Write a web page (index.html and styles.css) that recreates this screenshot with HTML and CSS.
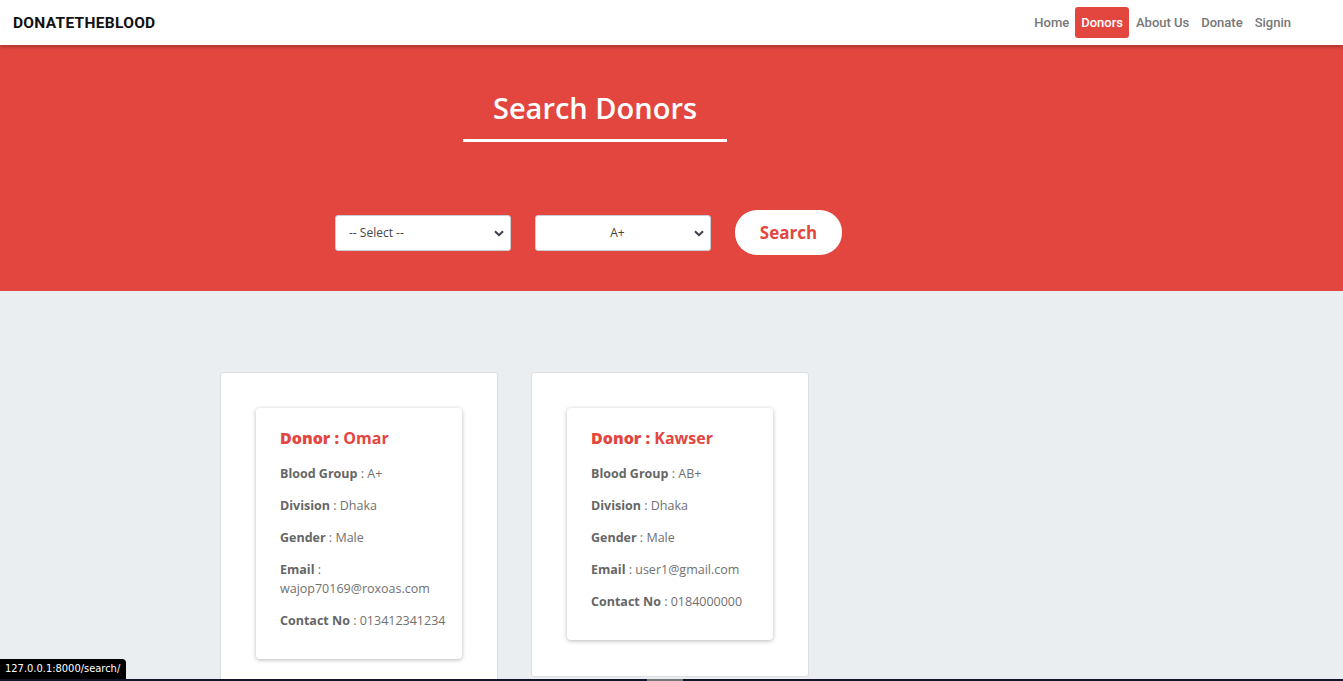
FILE: index.html
```html
<!DOCTYPE html>
<html>
<head>
<meta charset="utf-8">
<title>Search Donors</title>
<link rel="stylesheet" href="styles.css">
</head>
<body>
<header class="navbar">
  <div class="brand">DONATETHEBLOOD</div>
  <nav class="nav">
    <a class="nav-link">Home</a>
    <a class="nav-link active">Donors</a>
    <a class="nav-link">About Us</a>
    <a class="nav-link">Donate</a>
    <a class="nav-link">Signin</a>
  </nav>
</header>

<section class="hero">
  <div class="title-wrap">
    <h1 class="title">Search Donors</h1>
  </div>
  <form class="search-row">
    <div class="select-wrap">
      <select class="field left"><option>-- Select --</option></select>
      <svg class="chev" width="10" height="7" viewBox="0 0 10 7"><path d="M1 1.2 L5 5.2 L9 1.2" fill="none" stroke="#3a3f47" stroke-width="2"/></svg>
    </div>
    <div class="select-wrap">
      <select class="field centered"><option>A+</option></select>
      <svg class="chev" width="10" height="7" viewBox="0 0 10 7"><path d="M1 1.2 L5 5.2 L9 1.2" fill="none" stroke="#3a3f47" stroke-width="2"/></svg>
    </div>
    <button type="button" class="search-btn">Search</button>
  </form>
</section>

<main class="results">
  <div class="outer-card">
    <div class="donor-card">
      <h2 class="donor-name"><span class="lead">Donor :</span> Omar</h2>
      <p class="row"><b>Blood Group</b> : <span class="val">A+</span></p>
      <p class="row"><b>Division</b> : <span class="val">Dhaka</span></p>
      <p class="row"><b>Gender</b> : <span class="val">Male</span></p>
      <p class="row"><b>Email</b> : <span class="val">wajop70169@roxoas.com</span></p>
      <p class="row"><b>Contact No</b> : <span class="val">013412341234</span></p>
    </div>
  </div>
  <div class="outer-card">
    <div class="donor-card">
      <h2 class="donor-name"><span class="lead">Donor :</span> Kawser</h2>
      <p class="row"><b>Blood Group</b> : <span class="val">AB+</span></p>
      <p class="row"><b>Division</b> : <span class="val">Dhaka</span></p>
      <p class="row"><b>Gender</b> : <span class="val">Male</span></p>
      <p class="row"><b>Email</b> : <span class="val">user1@gmail.com</span></p>
      <p class="row"><b>Contact No</b> : <span class="val">0184000000</span></p>
    </div>
  </div>
</main>

<div class="status-url">127.0.0.1:8000/search/</div>
<div class="bottom-bar"><span class="thumb"></span></div>
</body>
</html>
```

FILE: styles.css
```css
* { box-sizing: border-box; }
html, body { margin: 0; padding: 0; }
body {
  background: #ebeef0;
  font-family: "Open Sans", "Noto Sans", sans-serif;
  height: 681px;
  overflow: hidden;
}

.navbar {
  position: relative;
  z-index: 2;
  height: 45px;
  background: #fff;
  box-shadow: 0 2px 4px rgba(0,0,0,0.25);
  display: flex;
  align-items: center;
  justify-content: space-between;
  padding: 0 46px 0 13px;
}
.brand {
  font-family: Roboto, "Liberation Sans", sans-serif;
  font-weight: 700;
  font-size: 15.5px;
  color: #111;
  letter-spacing: 0.3px;
}
.nav { display: flex; align-items: center; }
.nav-link {
  font-family: Roboto, "Liberation Sans", sans-serif;
  font-size: 13px;
  font-weight: 500;
  color: #777;
  padding: 7px 6px;
  line-height: 17px;
  border-radius: 3px;
}
.nav-link.active {
  background: #e3463f;
  color: #fff;
  padding: 7px 6px;
  margin: 0 1px;
}
.nav-link:first-child { padding-right: 5px; }

.hero {
  background: #e3463f;
  padding: 43px 0 36px 335px;
}
.title-wrap {
  width: 264px;
  margin-left: 128px;
  border-bottom: 3px solid #fff;
  padding-bottom: 11px;
}
.title {
  margin: 0;
  text-align: center;
  color: #fff;
  font-weight: 600;
  font-size: 29px;
  line-height: 40px;
}
.search-row {
  display: flex;
  align-items: center;
  gap: 24px;
  margin-top: 68px;
}
.select-wrap { position: relative; width: 176px; height: 36px; }
.field {
  appearance: none;
  -webkit-appearance: none;
  width: 100%;
  height: 36px;
  background: #fff;
  border: 1px solid #c9ced4;
  border-radius: 3px;
  font-family: "Open Sans", "Noto Sans", sans-serif;
  font-size: 12px;
  color: #444;
  padding: 0 24px 0 13px;
}
.field.centered { text-align: center; text-align-last: center; padding-left: 13px; }
.chev { position: absolute; right: 7px; top: 15px; pointer-events: none; }
.search-btn {
  width: 107px;
  height: 45px;
  border: none;
  border-radius: 22px;
  background: #fff;
  color: #e3463f;
  font-family: "Open Sans", "Noto Sans", sans-serif;
  font-weight: 700;
  font-size: 17px;
  padding: 0;
}

.results {
  display: flex;
  align-items: flex-start;
  gap: 33px;
  padding: 81px 0 0 220px;
}
.outer-card {
  width: 278px;
  background: #fff;
  border: 1px solid #dcdfe2;
  border-radius: 3px;
  padding: 35px 35px 36px;
}
.donor-card {
  background: #fff;
  border-radius: 4px;
  box-shadow: 0 1px 4px rgba(0,0,0,0.28);
  padding: 19px 12px 16px 24px;
}
.donor-name {
  margin: 0 0 15px;
  color: #e3463f;
  font-size: 16px;
  font-weight: 700;
  line-height: 22px;
}
.donor-name .lead { font-weight: 800; }
.row {
  margin: 0 0 13px;
  font-size: 12.5px;
  line-height: 19px;
  color: #707070;
}
.row b { color: #666; font-weight: 700; }
.val { display: inline-block; }

.status-url {
  position: fixed;
  left: 0;
  bottom: 2px;
  height: 20px;
  padding: 0 6px 0 5px;
  background: #000;
  color: #fff;
  font-family: "DejaVu Sans Condensed", "Liberation Sans Narrow", "Liberation Sans", sans-serif;
  font-size: 11px;
  line-height: 20px;
  border-top-right-radius: 4px;
  z-index: 5;
}
.bottom-bar {
  position: fixed;
  left: 0;
  right: 0;
  bottom: 0;
  height: 2px;
  background: #14142a;
  z-index: 5;
}
.thumb {
  position: absolute;
  left: 647px;
  width: 36px;
  top: 0;
  height: 2px;
  background: #777;
}
```
